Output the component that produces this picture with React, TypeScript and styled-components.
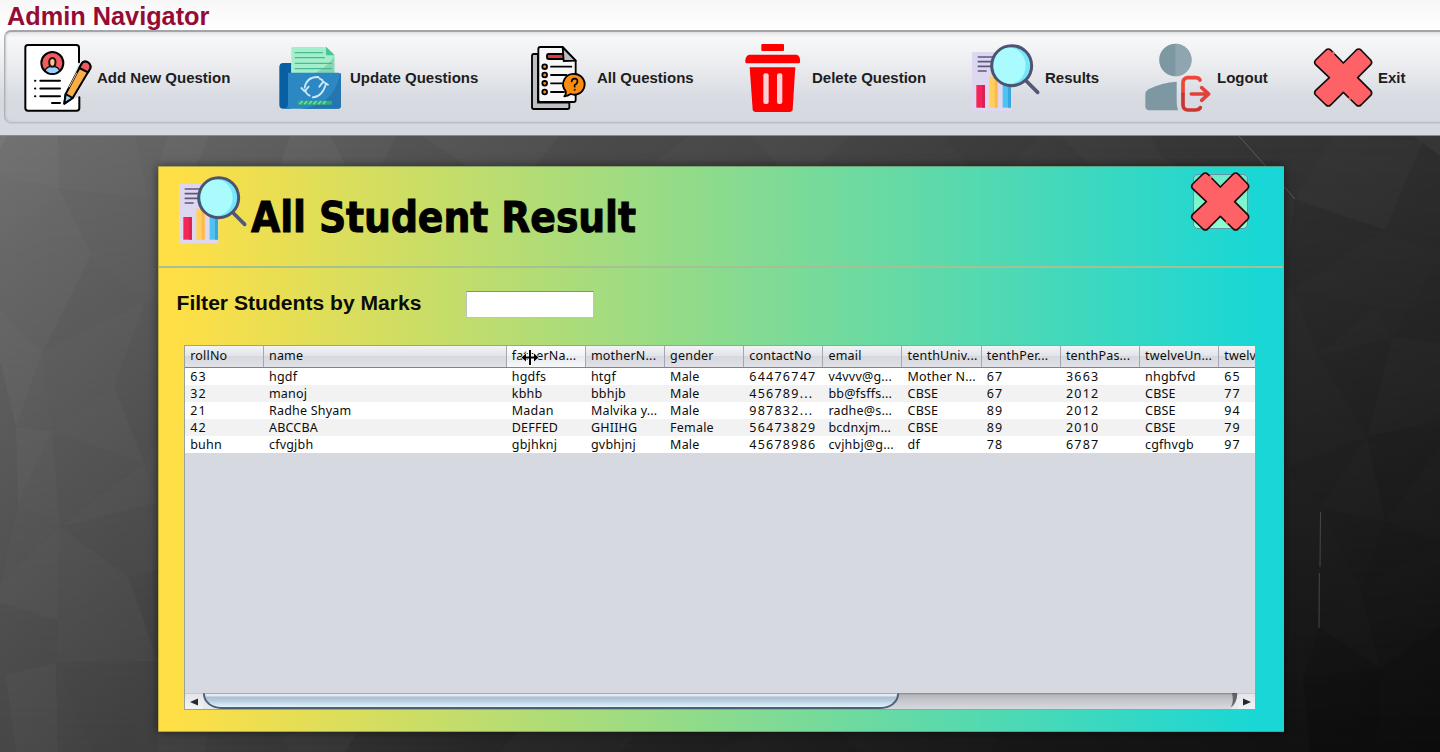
import React from "react";
import styled, { createGlobalStyle } from "styled-components";

const GlobalStyle = createGlobalStyle`
  *, *::before, *::after { box-sizing: border-box; }
  body { margin: 0; background: #222; overflow: hidden; }
`;

const Window = styled.div`
  display: flex;
  flex-direction: column;
  width: 1440px;
  height: 752px;
  overflow: hidden;
  font-family: "Liberation Sans", Arial, sans-serif;
`;

const Navigator = styled.header`
  height: 136px;
  flex: none;
  background: linear-gradient(#f7f7f8 0, #fff 30px, #d6d9e0 100px, #d6d9e0 100%);
  border-bottom: 1px solid #8a8b90;
`;

const NavTitle = styled.h1`
  margin: 0;
  height: 30px;
  padding: 2px 0 0 7px;
  font-size: 25.3px;
  line-height: 28px;
  font-weight: 700;
  color: #960b35;
  white-space: nowrap;
`;

const Toolbar = styled.nav`
  display: grid;
  grid-template-columns: 256px 251px 215px 227px 173px 168px 130px;
  width: 1460px;
  height: 93px;
  margin-left: 4px;
  padding: 11px 0 0 18px;
  border: 1px solid #b9bcc4;
  border-top: 2px solid #a3a5aa;
  border-left-color: #aeb0b5;
  border-radius: 7px;
  background: linear-gradient(#e9eaec 0, #f8f8f9 6px, #e9ebee 36px, #d8dbe2 66px, #d5d8df 100%);
  box-shadow: 0 1px 0 #c9ccd4, inset 1px 0 2px #c2c4c9;
`;

const NavItem = styled.button`
  display: flex;
  align-items: center;
  height: 70px;
  padding: 0;
  border: 0;
  background: none;
  color: #1d1d20;
  font: 700 15px "Liberation Sans", Arial, sans-serif;
  white-space: nowrap;
`;

const NavLabel = styled.span`
  padding-bottom: 1px;
`;

const NavIcon = styled.span<{ $w: number }>`
  display: flex;
  justify-content: flex-start;
  flex: none;
  width: ${(p) => p.$w}px;
  height: 70px;
`;

const Desktop = styled.main`
  position: relative;
  flex: 1;
  padding: 30px 0 0 158px;
`;

const Backdrop = styled.svg`
  position: absolute;
  inset: 0;
  width: 1440px;
  height: 616px;
`;

const Panel = styled.section`
  position: relative;
  width: 1126px;
  height: 566px;
  border: 1px solid rgba(110, 130, 90, 0.6);
  border-left-color: #c9b03c;
  border-right-color: #62b5b5;
  background: linear-gradient(90deg, #ffdf45 0, #ffdf45 1.5%, #18d7d6 98%, #18d7d6 100%) border-box;
  box-shadow: 0 0 9px rgba(0, 0, 0, 0.5);
`;

const PanelHeader = styled.div`
  display: flex;
  align-items: flex-start;
  height: 101px;
  padding: 8px 33px 0 20px;
  border-bottom: 2px solid #a5c194;
`;

const PanelTitle = styled.h2`
  flex: 1;
  margin: 16px 0 0 3px;
  font: 700 42px/54px "DejaVu Sans Condensed", "DejaVu Sans", sans-serif;
  font-stretch: condensed;
  color: #000;
  -webkit-text-stroke: 0.9px #000;
  letter-spacing: -0.08px;
  white-space: nowrap;
`;

const CloseButton = styled.button`
  position: relative;
  width: 60px;
  height: 70px;
  margin-top: -8px;
  padding: 0;
  border: 0;
  background: none;
  &::before {
    content: "";
    position: absolute;
    left: 3px;
    top: 7px;
    width: 55px;
    height: 55px;
    border: 1px solid #6095a6;
    border-radius: 5px;
    background: linear-gradient(#6ceccb, #8cffd0);
    box-shadow: 0 0 1px 1px #48c9cf;
  }
  svg { position: relative; display: block; }
`;

const FilterRow = styled.form`
  display: flex;
  height: 77px;
  padding-left: 17.5px;
`;

const FilterLabel = styled.label`
  width: 289.5px;
  padding-top: 20px;
  font-size: 21.1px;
  line-height: 29px;
  font-weight: 700;
  color: #0b0c08;
  white-space: nowrap;
`;

const FilterInput = styled.input`
  width: 128px;
  height: 27px;
  margin-top: 23px;
  padding: 2px 5px;
  border: 1px solid #c0c3bc;
  border-top: 1px solid #85907c;
  border-radius: 0;
  background: #fff;
  outline: none;
`;

const ScrollPane = styled.div`
  display: flex;
  flex-direction: column;
  width: 1072px;
  height: 365px;
  margin-left: 25px;
  border: 1px solid #9ba19f;
  background: #d6d9e0;
  overflow: hidden;
`;

const Viewport = styled.div`
  position: relative;
  flex: 1;
  overflow: hidden;
`;

const Row = styled.div<{ $odd?: boolean }>`
  display: grid;
  grid-template-columns: 78.8px 242.8px repeat(10, 79.16px);
  width: 1113.2px;
  height: 17px;
  background: ${(p) => (p.$odd ? "#f2f2f2" : "#fff")};
`;

const HeadRow = styled(Row)`
  height: 22px;
  border-bottom: 1px solid #80838c;
  background: linear-gradient(#f2f3f5, #e3e5ea 45%, #d5d8de 50%, #e0e2e8);
`;

const Cell = styled.div<{ $numeric?: boolean }>`
  padding-left: 5.2px;
  font: 400 12.5px/17px "Noto Sans", "Open Sans", sans-serif;
  letter-spacing: ${(p) => (p.$numeric ? "1.25px" : "0.2px")};
  color: #0c0c0c;
  white-space: pre;
`;

const HeadCell = styled(Cell)<{ $hot?: boolean }>`
  line-height: 20px;
  border-right: 1px solid #a4a7af;
  background: ${(p) => (p.$hot ? "linear-gradient(#fff, #f0f1f5 50%, #e8eaef 50%, #f7f8fa)" : "none")};
`;

const ResizeCursor = styled.svg`
  position: absolute;
  left: 336px;
  top: 3px;
  width: 18px;
  height: 17px;
`;

const ScrollBar = styled.div`
  display: flex;
  flex: none;
  height: 16px;
  background: linear-gradient(#83858c 0, #b4b6bb 2px, #c6c8cd 8px, #d7d9de 100%);
`;

const ArrowButton = styled.button<{ $right?: boolean }>`
  display: flex;
  align-items: center;
  justify-content: center;
  width: ${(p) => (p.$right ? 17 : 18)}px;
  padding: 0;
  border: 0;
  border-top: 1px solid #c8cad0;
  background: linear-gradient(#e3e5e9, #f2f3f5);
`;

const TrackStart = styled.div`
  background: linear-gradient(90deg, #e6e8eb 50%, transparent 50%);
  width: 696px;
`;

const Thumb = styled.div`
  width: 696px;
  height: 16px;
  border: 2px solid #4d5f73;
  border-top: 1px solid #a4adb8;
  border-radius: 0 0 18px 18px / 0 0 15px 15px;
  background: linear-gradient(#e6eef5 0, #dfe8f0 2px, #a9bfd5 3px, #b9cfe2 7px, #dcedf8 12px, #e9f8ff 100%);
`;

const TrackEnd = styled.div`
  flex: 1;
  display: flex;
  justify-content: flex-end;
`;

function Facets() {
  const facets: [string, number][] = [
    ["0,135 8,135 0,150", 0.08],
    ["8,135 58,135 59,188 0,176 0,150", 0.045],
    ["58,135 135,135 148,198 59,188", 0.015],
    ["0,176 59,188 0,246", 0.03],
    ["0,246 59,188 91,254 0,271", 0.02],
    ["59,188 148,198 91,254", 0],
    ["0,271 91,254 42,353 0,309", 0.025],
    ["0,309 42,353 0,361", 0.035],
    ["91,254 148,198 145,301", 0.005],
    ["91,254 145,301 42,353", -0.005],
    ["42,353 145,301 114,387 52,431", 0.01],
    ["0,361 42,353 16,427", 0.03],
    ["42,353 52,431 16,427", 0.015],
    ["145,301 158,295 158,388 114,387", -0.02],
    ["114,387 158,388 158,440 144,463", -0.02],
    ["52,431 114,387 144,463", 0.015],
    ["52,431 144,463 60,527", 0.002],
    ["16,427 52,431 18,504", 0.03],
    ["18,504 52,431 60,527", 0.02],
    ["60,527 144,463 158,502", 0.01],
    ["60,527 158,502 128,577", -0.005],
    ["0,585 18,504 60,527", 0.012],
    ["0,585 60,527 58,621 0,602", 0.022],
    ["60,527 128,577 58,621", 0.01],
    ["128,577 158,569 158,661", -0.03],
    ["58,621 128,577 158,661 56,663", 0.012],
    ["6,675 56,663 58,752 16,752", 0.022],
    ["56,663 158,661 130,752 58,752", -0.01],
    ["56,663 92,752 58,752", 0.008],
    ["168,135 210,135 196,166 158,166", 0.03],
    ["290,135 330,135 346,166 280,166", 0.03],
    ["396,135 420,135 468,166 382,166", -0.04],
    ["560,135 690,135 650,166 534,166", -0.04],
    ["750,135 850,135 820,166 780,166", 0.02],
    ["940,135 1040,135 1010,166 970,166", -0.03],
    ["1060,135 1150,135 1162,158 1180,166 1090,166", 0.02],
    ["158,731 208,731 204,752 158,752", 0.02],
    ["280,731 358,731 345,752 290,752", 0.015],
    ["358,731 518,731 500,752 345,752", -0.05],
    ["640,731 760,731 720,752 620,752", -0.05],
    ["840,731 1000,731 990,752 860,752", 0.01],
    ["1334,135 1423,141 1385,230 1295,199", 0.01],
    ["1423,141 1440,156 1440,257 1385,230", -0.03],
    ["1412,135 1440,135 1440,156", 0.03],
    ["1295,199 1385,230 1293,290 1284,286", -0.05],
    ["1385,230 1440,257 1392,337 1376,307 1293,290", -0.02],
    ["1293,290 1376,307 1318,356", -0.03],
    ["1440,257 1440,343 1392,337", -0.03],
    ["1318,356 1392,337 1367,437", -0.03],
    ["1392,337 1440,343 1440,420 1367,437", 0.008],
    ["1286,468 1367,437 1321,508", -0.03],
    ["1367,437 1440,420 1440,447 1385,522", -0.04],
    ["1367,437 1385,522 1321,508", 0.008],
    ["1321,508 1385,522 1360,590", -0.02],
    ["1385,522 1440,540 1360,590", -0.05],
    ["1360,590 1440,540 1440,625 1381,668", -0.01],
    ["1360,590 1381,668 1319,627", 0.006],
    ["1319,627 1381,668 1303,679", -0.05],
    ["1381,668 1440,625 1440,752 1378,752", -0.1],
    ["1303,679 1381,668 1378,752 1310,752", -0.13],
  ];
  return (
    <Backdrop viewBox="0 136 1440 616" preserveAspectRatio="none">
      <defs>
        <linearGradient id="bgTop">
          <stop offset="0" stopColor="#6c6c6c" />
          <stop offset=".4" stopColor="#505050" />
          <stop offset=".8" stopColor="#383838" />
          <stop offset="1" stopColor="#313131" />
        </linearGradient>
        <linearGradient id="bgBottom">
          <stop offset="0" stopColor="#474747" />
          <stop offset=".1" stopColor="#3f3f3f" />
          <stop offset=".35" stopColor="#282828" />
          <stop offset=".65" stopColor="#181818" />
          <stop offset="1" stopColor="#0e0e0e" />
        </linearGradient>
        <linearGradient id="bgFade" x1="0" y1="0" x2="0" y2="1">
          <stop offset="0" stopColor="#fff" stopOpacity="0" />
          <stop offset="1" stopColor="#fff" />
        </linearGradient>
        <mask id="bgMask">
          <rect y="136" width="1440" height="616" fill="url(#bgFade)" />
        </mask>
      </defs>
      <rect y="136" width="1440" height="616" fill="url(#bgTop)" />
      <rect y="136" width="1440" height="616" fill="url(#bgBottom)" mask="url(#bgMask)" />
      {facets.map(([points, shade]) => (
        <polygon key={points} points={points} fill={shade > 0 ? "#fff" : "#000"} fillOpacity={Math.abs(shade)} />
      ))}
      <g stroke="#6a6a6a" strokeWidth="1" fill="none" opacity=".75">
        <path d="M1238 135L1295 199" />
        <path d="M1320.5 512L1320 567M1319.3 573L1319 628" stroke="#555" />
      </g>
    </Backdrop>
  );
}

function AddIcon() {
  return (
    <svg width="70" height="70" viewBox="69 130 210 210" fill="none" stroke="#000" strokeWidth="6" strokeLinecap="round" strokeLinejoin="round">
      <path d="M237 188V145Q237 135 228 135H84Q76 135 76 143V325Q76 333 84 333H230Q238 333 238 325V293L205 300 190 316 225 214Z" fill="#fff" stroke="none" />
      <path d="M237 188V144Q237 136 229 136H84Q76 136 76 144V325Q76 333 84 333H230Q238 333 238 325V293" />
      <circle cx="157" cy="190" r="33" fill="#f25b5f" />
      <path d="M135 214Q139 200 157 200T179 214Q157 231 135 214Z" fill="#9bd1fa" strokeWidth="4" />
      <path d="M157 175C170 175 169 200 157 201C145 200 144 175 157 175Z" fill="#ffc78e" stroke="#211" />
      <path d="M121 243.500H180M121 266.500H180M121 289.500H180M156 310H180M105 243.500H106M105 266.500H106M105 289.500H106" />
      <path d="M193 312L197 283L244 194Q250 182 262 187Q274 194 271 206L218 295Z" fill="#f9ad4b" />
      <path d="M238 205L244 194Q250 182 262 187Q274 194 271 206L264 218Z" fill="#ec5b60" />
      <path d="M193 312L197 283L218 295Z" fill="#9bd1fa" />
      <path d="M208 262L230 220" stroke="#ffcb79" strokeWidth="3" />
    </svg>
  );
}

function UpdateIcon() {
  return (
    <svg width="63" height="70" viewBox="27 39 189 210" fill="none" strokeLinecap="round" strokeLinejoin="round">
      <path d="M28 112Q28 99 40 99H64V236H40Q28 236 28 224Z" fill="#0860a2" />
      <path d="M64 54Q64 51 67 51H169L193 75V140H64Z" fill="#a4eecb" />
      <path d="M193 77Q178 106 134 130H193Z" fill="#88d5b4" />
      <path d="M168 50L194 76H172Q168 76 168 72Z" fill="#46c692" />
      <path d="M76 68H157M76 83H163M76 100H184M76 116H184" stroke="#48ba91" strokeWidth="4" />
      <path d="M54 128H204Q213 128 213 137V227Q213 236 204 236H47Q54 231 54 222Z" fill="#2c87c3" />
      <path d="M213 129V227Q213 236 204 236H89Q194 227 210 131Z" fill="#2475b0" />
      <path d="M145 141Q110 140 104 173M94 174L104 184L116 170M128 202Q157 200 168 161M148 170L160 155L174 164M119 197Q107 191 106 180M148 145Q158 149 161 157" stroke="#cae8fa" strokeWidth="5.500" />
      <rect x="82" y="212" width="104" height="12" rx="3" fill="#2fad79" />
      <path d="M89 223L97 213M103 223L111 213M117 223L125 213M131 223L139 213M145 223L153 213M159 223L167 213" stroke="#72dca5" strokeWidth="5" strokeLinecap="butt" />
    </svg>
  );
}

function AllIcon() {
  return (
    <svg width="57" height="70" viewBox="780 39 171 210" fill="none" stroke="#000" strokeWidth="5.500" strokeLinecap="round" strokeLinejoin="round">
      <path d="M804 72H790Q786 72 786 77V232Q786 237 791 237H893Q898 237 898 232V218H804Z" fill="#bfc0c2" />
      <path d="M811 51H878L917 92V210Q917 216 911 216H811Q805 216 805 210V57Q805 51 811 51Z" fill="#f7f7f8" />
      <rect x="831" y="72" width="51" height="15" rx="5" fill="#e1393d" />
      <path d="M878 52L917 92L881 93Z" fill="#bdbec1" />
      <g fill="#fa9226">
        <circle cx="824" cy="110" r="7" />
        <circle cx="824" cy="135" r="7" />
        <circle cx="824" cy="160" r="7" />
        <circle cx="824" cy="186" r="7" />
      </g>
      <path d="M843 110H904M843 135H889M843 160H876M843 186H882" />
      <path d="M914 132A31 31 0 1 1 902 192Q893 198 883 199Q889 193 887 183A31 31 0 0 1 914 132Z" fill="#fb8c10" />
      <path d="M905 154Q906 145 915 146Q924 148 922 157Q920 163 914 165V170" strokeWidth="5" />
      <circle cx="914" cy="179" r="1" strokeWidth="4" />
    </svg>
  );
}

function DeleteIcon() {
  return (
    <svg width="56" height="70" viewBox="435 39 168 210" fill="#fe0000">
      <rect x="484" y="42" width="68" height="21" rx="3" />
      <path d="M447 74H590Q600 77 600 91V96Q600 100 596 100H440Q436 100 436 96V91Q437 77 447 74Z" />
      <path d="M449 112H586L578 238Q577 246 569 246H467Q459 246 458 238Z" />
      <rect x="490" y="130" width="16" height="92" rx="6" fill="#fbd0d7" />
      <rect x="531" y="130" width="16" height="92" rx="6" fill="#fbd0d7" />
    </svg>
  );
}

function ResultsIcon() {
  return (
    <svg width="69" height="70" viewBox="96 39 207 210" fill="none">
      <path d="M96 66H214V244H96Z" fill="#ddd7f0" />
      <path d="M113 81H166M113 95H156M113 109H160M113 123H140" stroke="#5e587d" strokeWidth="5" />
      <path d="M109 165H135V233H109Z" fill="#f32656" />
      <path d="M126 165H135V233H126Z" fill="#d92355" />
      <path d="M148 140H173V233H148Z" fill="#ffd15c" />
      <path d="M164 140H173V233H164Z" fill="#ffb84c" />
      <path d="M188 165H213V233H188Z" fill="#4ec2f0" />
      <path d="M204 165H213V233H204Z" fill="#38a6df" />
      <path d="M253 147L293 187" stroke="#535975" strokeWidth="11" strokeLinecap="round" />
      <circle cx="215" cy="107" r="60" fill="#75e6fc" stroke="#4e5470" strokeWidth="9" />
      <ellipse cx="209" cy="107" rx="48" ry="54" fill="#a9fbfe" />
    </svg>
  );
}

function LogoutIcon() {
  return (
    <svg width="67" height="70" viewBox="615 39 201 210" fill="none" strokeLinecap="round" strokeLinejoin="round">
      <circle cx="706" cy="90" r="48.500" fill="#7d98a3" />
      <path d="M706 41.500A48.500 48.500 0 0 1 706 138.500Z" fill="#8fa6b0" />
      <path d="M710 155Q666 157 625 178Q616 184 616 193V230Q617 240 628 241H714Q709 225 710 206Z" fill="#7d98a3" />
      <path d="M780 150Q777 143 765 143H743Q729 145 729 158V191" stroke="#ee4639" strokeWidth="11" />
      <path d="M729 192V225Q730 240 744 240H766Q777 240 781 233" stroke="#cb3730" strokeWidth="11" />
      <path d="M754 192H806M785 173L806 192L785 211" stroke="#e0423a" strokeWidth="11" />
    </svg>
  );
}

function CrossIcon() {
  return (
    <svg width="60" height="70" viewBox="1119 39 180 210" fill="none" strokeLinejoin="round" strokeLinecap="round">
      <path
        d="M1158 60Q1165 54 1172 60L1210 99L1249 60Q1256 54 1263 60L1292 90Q1298 97 1292 104L1253 143L1292 182Q1298 189 1292 196L1263 225Q1256 231 1249 225L1210 187L1172 225Q1165 231 1158 225L1127 195Q1121 188 1127 181L1168 143L1127 104Q1121 97 1127 90Z"
        fill="#ff6266"
        stroke="#160b0c"
        strokeWidth="5"
      />
      <path d="M1178 66L1184 72M1226 203L1232 209" stroke="#ff6266" strokeWidth="6" strokeLinecap="butt" />
    </svg>
  );
}

const navItems = [
  { label: "Add New Question", width: 74, icon: <AddIcon /> },
  { label: "Update Questions", width: 71, icon: <UpdateIcon /> },
  { label: "All Questions", width: 67, icon: <AllIcon /> },
  { label: "Delete Question", width: 67, icon: <DeleteIcon /> },
  { label: "Results", width: 73, icon: <ResultsIcon /> },
  { label: "Logout", width: 72, icon: <LogoutIcon /> },
  { label: "Exit", width: 65, icon: <CrossIcon /> },
];

const columns = ["rollNo", "name", "fatherNa...", "motherN...", "gender", "contactNo", "email", "tenthUniv...", "tenthPer...", "tenthPas...", "twelveUn...", "twelv"];

const students = [
  ["63", "hgdf", "hgdfs", "htgf", "Male", "64476747", "v4vvv@g...", "Mother N...", "67", "3663", "nhgbfvd", "65"],
  ["32", "manoj", "kbhb", "bbhjb", "Male", "456789...", "bb@fsffs...", "CBSE", "67", "2012", "CBSE", "77"],
  ["21", "Radhe Shyam", "Madan", "Malvika y...", "Male", "987832...", "radhe@s...", "CBSE", "89", "2012", "CBSE", "94"],
  ["42", "ABCCBA", "DEFFED", "GHIIHG", "Female", "56473829", "bcdnxjm...", "CBSE", "89", "2010", "CBSE", "79"],
  ["buhn", "cfvgjbh", "gbjhknj", "gvbhjnj", "Male", "45678986", "cvjhbj@g...", "df", "78", "6787", "cgfhvgb", "97"],
];

export default function App() {
  return (
    <Window>
      <GlobalStyle />
      <Navigator>
        <NavTitle>Admin Navigator</NavTitle>
        <Toolbar>
          {navItems.map((item) => (
            <NavItem key={item.label}>
              <NavIcon $w={item.width}>{item.icon}</NavIcon>
              <NavLabel>{item.label}</NavLabel>
            </NavItem>
          ))}
        </Toolbar>
      </Navigator>
      <Desktop>
        <Facets />
        <Panel>
          <PanelHeader>
            <ResultsIcon />
            <PanelTitle>All Student Result</PanelTitle>
            <CloseButton aria-label="Close">
              <CrossIcon />
            </CloseButton>
          </PanelHeader>
          <FilterRow>
            <FilterLabel htmlFor="marks">Filter Students by Marks</FilterLabel>
            <FilterInput id="marks" />
          </FilterRow>
          <ScrollPane>
            <Viewport>
              <HeadRow>
                {columns.map((c, i) => (
                  <HeadCell key={c} $hot={i === 2}>{c}</HeadCell>
                ))}
              </HeadRow>
              {students.map((s, r) => (
                <Row key={r} $odd={r % 2 === 1}>
                  {s.map((v, i) => (
                    <Cell key={i} $numeric={/^[\d.]+$/.test(v)}>{v}</Cell>
                  ))}
                </Row>
              ))}
              <ResizeCursor viewBox="0 0 18 17">
                <path d="M8 1H10V7.500H13V4.500L17.500 8.500L13 12.500V9.500H10V16H8V9.500H5V12.500L.5 8.500L5 4.500V7.500H8Z" fill="#000" stroke="#fff" strokeWidth="1.400" paintOrder="stroke" />
              </ResizeCursor>
            </Viewport>
            <ScrollBar>
              <ArrowButton aria-label="Scroll left">
                <svg width="8" height="8" viewBox="0 0 8 8"><path d="M0 4L8 0.500V7.500Z" fill="#26292e" /></svg>
              </ArrowButton>
              <TrackStart>
                <Thumb />
              </TrackStart>
              <TrackEnd>
                <svg width="10" height="17" viewBox="0 0 10 17">
                  <path d="M10 0V17H1Q8 14 9 0Z" fill="#e9ebee" />
                  <path d="M4 0H9.500Q9 10 3 14Q6 8 4 0Z" fill="#44474d" opacity=".75" />
                </svg>
              </TrackEnd>
              <ArrowButton $right aria-label="Scroll right">
                <svg width="8" height="8" viewBox="0 0 8 8"><path d="M8 4L0 0.500V7.500Z" fill="#26292e" /></svg>
              </ArrowButton>
            </ScrollBar>
          </ScrollPane>
        </Panel>
      </Desktop>
    </Window>
  );
}
